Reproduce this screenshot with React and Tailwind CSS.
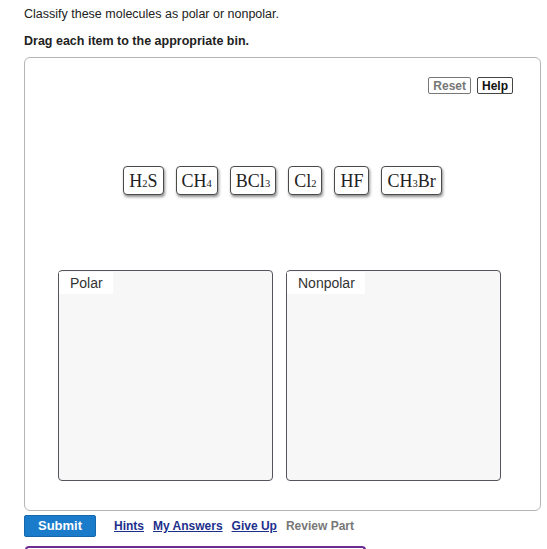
import React from 'react';

const molecules = [
    { key: 'h2s', parts: ['H', ['2'], 'S'] },
    { key: 'ch4', parts: ['CH', ['4']] },
    { key: 'bcl3', parts: ['BCl', ['3']] },
    { key: 'cl2', parts: ['Cl', ['2']] },
    { key: 'hf', parts: ['HF'] },
    { key: 'ch3br', parts: ['CH', ['3'], 'Br'] },
];

const Tile = ({ parts }) => (
    <div className="h-[29px] px-[5px] flex items-center bg-white border-[1.5px] border-[#4a4a4a] rounded-[4px] shadow-[1px_2px_3px_rgba(0,0,0,0.45)] font-['Liberation_Serif',serif] text-[18px] text-[#222] leading-none">
        {parts.map((p, i) =>
            Array.isArray(p) ? (
                <sub key={i} className="text-[10.5px] relative top-[3px] align-baseline">{p[0]}</sub>
            ) : (
                <span key={i}>{p}</span>
            )
        )}
    </div>
);

const Bin = ({ label, width }) => (
    <div className={`${width} h-[211px] bg-[#f7f7f7] border-[1.5px] border-[#55545c] rounded-[4px]`}>
        <div className="inline-block h-[22px] pl-[11px] pr-[10px] bg-white text-[14px] leading-[22px] text-[#333]">
            {label}
        </div>
    </div>
);

const App = () => {
    return (
        <div className="w-[547px] h-[549px] overflow-hidden bg-white pl-[24px] font-['Liberation_Sans',Arial,sans-serif] text-[#222]">
            <p className="pt-[6px] text-[12.5px] leading-[16px]">Classify these molecules as polar or nonpolar.</p>
            <p className="mt-[11px] text-[12.5px] leading-[16px] font-bold">Drag each item to the appropriate bin.</p>

            <div className="mt-[8px] w-[517px] h-[454px] border border-[#b5b5b5] rounded-[6px] flex flex-col">
                <div className="flex justify-end gap-[6px] pt-[19px] pr-[27px]">
                    <button className="h-[17px] px-[4px] text-[12px] leading-[12px] font-bold text-[#777] border border-[#777] rounded-[2px] bg-white">Reset</button>
                    <button className="h-[17px] px-[4px] text-[12px] leading-[12px] font-bold text-[#111] border border-[#444] rounded-[2px] bg-white">Help</button>
                </div>

                <div className="mt-[72px] flex justify-center gap-[12px]">
                    {molecules.map(m => (
                        <Tile key={m.key} parts={m.parts} />
                    ))}
                </div>

                <div className="mt-[75px] pl-[33px] flex gap-[13px]">
                    <Bin label="Polar" width="w-[215px]" />
                    <Bin label="Nonpolar" width="w-[215px]" />
                </div>
            </div>

            <div className="mt-[4px] flex items-center">
                <button className="w-[72px] h-[22px] bg-[#1b7bcb] border border-[#1566ab] rounded-[2px] text-white text-[13px] font-bold">Submit</button>
                <div className="ml-[18px] flex gap-[9px] text-[12px] font-bold">
                    <a className="underline text-[#1d2f8c]">Hints</a>
                    <a className="underline text-[#1d2f8c]">My Answers</a>
                    <a className="underline text-[#1d2f8c]">Give Up</a>
                    <span className="text-[#777]">Review Part</span>
                </div>
            </div>

            <div className="mt-[9px] ml-[1px] w-[341px] h-[10px] border-t-2 border-x-2 border-[#6e2c91] rounded-t-[4px]"></div>
        </div>
    );
};

export default App;
